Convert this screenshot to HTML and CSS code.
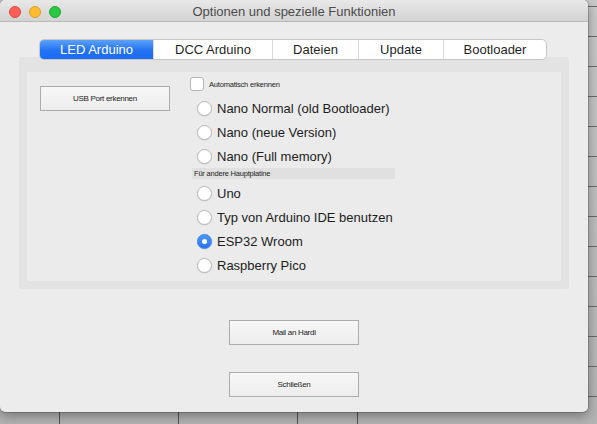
FILE: index.html
```html
<!DOCTYPE html>
<html lang="de">
<head>
<meta charset="utf-8">
<title>Optionen und spezielle Funktionien</title>
<link rel="stylesheet" href="styles.css">
</head>
<body>
<div class="window">
  <div class="titlebar">
    <div class="lights">
      <span class="light red"></span>
      <span class="light yellow"></span>
      <span class="light green"></span>
    </div>
    <div class="title">Optionen und spezielle Funktionien</div>
    <div></div>
  </div>

  <div class="tabs">
    <div class="tab active w1">LED Arduino</div>
    <div class="tab w2">DCC Arduino</div>
    <div class="tab w3">Dateien</div>
    <div class="tab w4">Update</div>
    <div class="tab w5">Bootloader</div>
  </div>

  <div class="panel">
    <div class="inner">
      <div class="left-col">
        <button class="btn">USB Port erkennen</button>
      </div>
      <div class="right-col">
        <label class="check-row"><span class="checkbox"></span><span class="small">Automatisch erkennen</span></label>
        <div class="radio-row"><span class="radio"></span><span class="rlabel">Nano Normal (old Bootloader)</span></div>
        <div class="radio-row"><span class="radio"></span><span class="rlabel">Nano (neue Version)</span></div>
        <div class="radio-row"><span class="radio"></span><span class="rlabel">Nano (Full memory)</span></div>
        <div class="group-label small">Für andere Hauptplatine</div>
        <div class="radio-row"><span class="radio"></span><span class="rlabel">Uno</span></div>
        <div class="radio-row"><span class="radio"></span><span class="rlabel">Typ von Arduino IDE benutzen</span></div>
        <div class="radio-row"><span class="radio checked"></span><span class="rlabel">ESP32 Wroom</span></div>
        <div class="radio-row"><span class="radio"></span><span class="rlabel">Raspberry Pico</span></div>
      </div>
    </div>
  </div>

  <div class="bottom">
    <button class="btn">Mail an Hardi</button>
    <button class="btn">Schließen</button>
  </div>
</div>
</body>
</html>
```

FILE: styles.css
```css
html, body {
  margin: 0;
  padding: 0;
}
body {
  width: 597px;
  height: 424px;
  overflow: hidden;
  font-family: "Liberation Sans", Arial, sans-serif;
  background-color: #bcbcbc;
  background-image:
    linear-gradient(90deg, transparent 59px, #555 59px, #555 60px, transparent 60px),
    linear-gradient(90deg, transparent 178px, #555 178px, #555 179px, transparent 179px),
    linear-gradient(90deg, transparent 297px, #555 297px, #555 298px, transparent 298px),
    linear-gradient(90deg, transparent 357px, #555 357px, #555 358px, transparent 358px),
    repeating-linear-gradient(180deg, transparent 0, transparent 6px, #6a6a6a 6px, #6a6a6a 7px, transparent 7px, transparent 30px),
    linear-gradient(180deg, #c9c9c9, #b3b3b3);
}

.window {
  width: 588px;
  height: 412px;
  background: #ececec;
  border-radius: 5px;
  box-shadow: 0 0 0 0.5px rgba(0,0,0,0.35), 0 4px 12px rgba(0,0,0,0.35);
  overflow: hidden;
  display: flex;
  flex-direction: column;
}

.titlebar {
  height: 21px;
  flex: none;
  display: grid;
  grid-template-columns: 1fr auto 1fr;
  align-items: center;
  background: linear-gradient(180deg, #e9e8e9, #d4d3d4);
  border-bottom: 1px solid #b9b9b9;
}
.lights {
  display: flex;
  gap: 8px;
  padding-left: 9px;
  padding-top: 2px;
}
.light {
  width: 12px;
  height: 12px;
  border-radius: 50%;
  box-sizing: border-box;
}
.red { background: #fd5f57; border: 0.5px solid #de4640; }
.yellow { background: #febc2e; border: 0.5px solid #dd9f24; }
.green { background: #28c840; border: 0.5px solid #1ca92e; }
.title {
  font-size: 13px;
  color: #4b4b4b;
  padding-top: 2px;
}

.tabs {
  position: relative;
  z-index: 1;
  display: flex;
  margin: 17px 0 0 39px;
  width: 508px;
  height: 21px;
  box-sizing: border-box;
  border: 1px solid #c6c6c6;
  border-radius: 5px;
  background: #fff;
  overflow: hidden;
  flex: none;
}
.tab {
  font-size: 13px;
  line-height: 19px;
  text-align: center;
  color: #1f1f1f;
  box-sizing: border-box;
  border-left: 1px solid #d9d9d9;
}
.tab.active {
  color: #fff;
  border-left: none;
  background: linear-gradient(180deg, #5ba2fa, #2372f3 55%, #1a6cf3);
}
.w1 { width: 113px; }
.w2 { width: 119px; }
.w3 { width: 86px; }
.w4 { width: 85px; }
.w5 { width: 103px; }

.panel {
  margin: -3px 19px 0 19px;
  height: 232px;
  box-sizing: border-box;
  padding: 15px 8px 8px 8px;
  background: #e3e3e3;
  border-radius: 4px;
  flex: none;
}
.inner {
  height: 209px;
  background: #ebebeb;
  display: flex;
}
.left-col {
  padding: 14px 0 0 13px;
  width: 130px;
  flex: none;
}
.right-col {
  margin-left: 20px;
  padding-top: 5px;
  display: flex;
  flex-direction: column;
}

.btn {
  display: block;
  width: 130px;
  height: 25px;
  padding: 0;
  border: 1px solid #acacac;
  border-radius: 0;
  background: linear-gradient(180deg, #f7f7f7, #ededed);
  font-family: "Liberation Sans", Arial, sans-serif;
  font-size: 8px;
  letter-spacing: -0.3px;
  color: #1a1a1a;
}

.small {
  font-size: 7.5px;
  letter-spacing: -0.2px;
  color: #222;
}
.check-row {
  display: flex;
  align-items: center;
  height: 14px;
  margin-bottom: 5px;
}
.checkbox {
  width: 14px;
  height: 14px;
  box-sizing: border-box;
  border: 1px solid #b5b5b5;
  border-radius: 3px;
  background: #fff;
  margin-right: 5px;
}
.radio-row {
  display: flex;
  align-items: center;
  height: 24px;
  padding-left: 7px;
}
.radio {
  width: 15px;
  height: 15px;
  box-sizing: border-box;
  border-radius: 50%;
  border: 1px solid #b8b8b8;
  background: #fff;
  box-shadow: 0 0.5px 1px rgba(0,0,0,0.12);
  margin-right: 5px;
  display: flex;
  align-items: center;
  justify-content: center;
}
.radio.checked {
  border-color: #2f7cf0;
  background: linear-gradient(180deg, #4f97f8, #2a76f2);
}
.radio.checked::after {
  content: "";
  width: 5px;
  height: 5px;
  border-radius: 50%;
  background: #fff;
}
.rlabel {
  font-size: 13px;
  color: #1c1c1c;
}
.group-label {
  margin: 0 0 2px 2px;
  width: 201px;
  height: 11px;
  line-height: 11px;
  padding-left: 2px;
  background: #e0e0e0;
}

.bottom {
  display: flex;
  flex-direction: column;
  align-items: center;
  gap: 27px;
  margin-top: 31px;
}
```
